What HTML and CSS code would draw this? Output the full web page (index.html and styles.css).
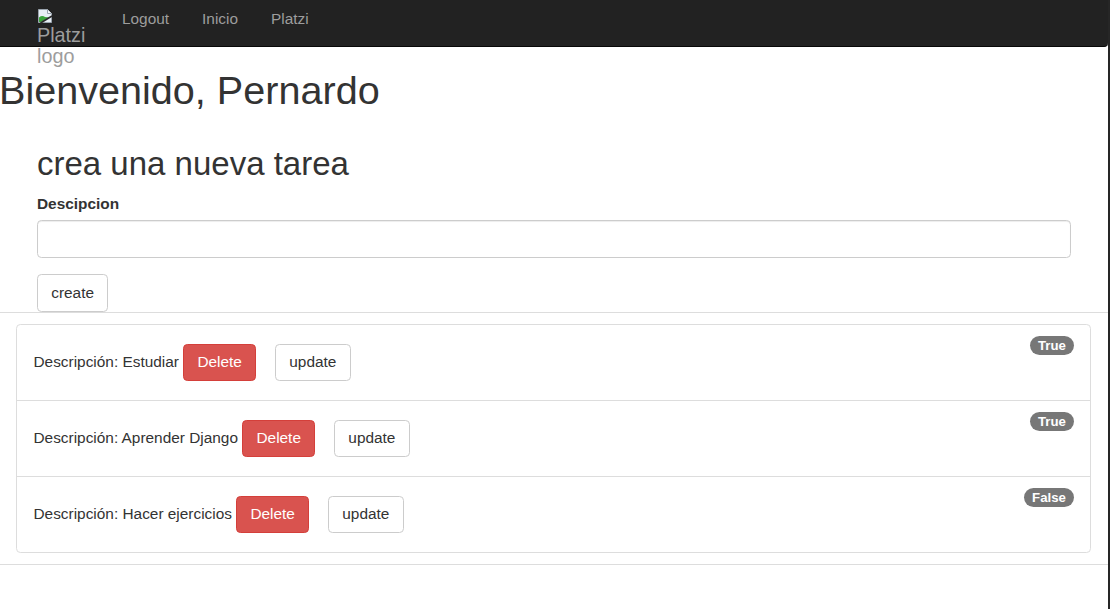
FILE: index.html
```html
<!DOCTYPE html>
<html lang="es">
<head>
<meta charset="utf-8">
<title>Tareas</title>
<link rel="stylesheet" href="styles.css">
</head>
<body>
<div class="page">
  <nav class="navbar">
    <div class="brand">
      <svg class="broken" width="16" height="16" viewBox="0 0 16 16">
        <path d="M1.5 1.5 H10.5 L14.5 5.5 V14.5 H1.5 Z" fill="#e8eef4" stroke="#9aa4ae"/>
        <path d="M10.5 1.5 V5.5 H14.5" fill="#f4f6f8" stroke="#9aa4ae"/>
        <path d="M2 14 V9.5 Q5 7 8 9 L12.5 9.5 L4 14 Z" fill="#3aa23a"/>
        <path d="M3.5 15 L15 8" stroke="#2b2b2b" stroke-width="1.6"/>
      </svg>
      <span class="alt">Platzi logo</span>
    </div>
    <ul class="nav">
      <li><a href="#">Logout</a></li>
      <li><a href="#">Inicio</a></li>
      <li><a href="#">Platzi</a></li>
    </ul>
  </nav>

  <h1 class="welcome">Bienvenido, Pernardo</h1>

  <div class="container">
    <h2 class="title">crea una nueva tarea</h2>
    <form class="task-form">
      <div class="form-group">
        <label class="label" for="desc">Descipcion</label>
        <input class="form-control" id="desc" type="text">
      </div>
      <button class="btn btn-default" type="button">create</button>
    </form>
  </div>

  <section class="tasks">
    <ul class="list-group">
      <li class="list-item">
        <span class="badge">True</span>
        <span class="desc">Descripción: Estudiar</span>
        <button class="btn btn-danger" type="button">Delete</button>
        <button class="btn btn-default btn-update" type="button">update</button>
      </li>
      <li class="list-item">
        <span class="badge">True</span>
        <span class="desc">Descripción: Aprender Django</span>
        <button class="btn btn-danger" type="button">Delete</button>
        <button class="btn btn-default btn-update" type="button">update</button>
      </li>
      <li class="list-item">
        <span class="badge">False</span>
        <span class="desc">Descripción: Hacer ejercicios</span>
        <button class="btn btn-danger" type="button">Delete</button>
        <button class="btn btn-default btn-update" type="button">update</button>
      </li>
    </ul>
  </section>
</div>
</body>
</html>
```

FILE: styles.css
```css
* { box-sizing: border-box; }

html, body {
  margin: 0;
  padding: 0;
  background: #fff;
}

body {
  font-family: "Liberation Sans", Arial, Helvetica, sans-serif;
  font-size: 15.4px;
  line-height: 22px;
  color: #333;
}

.page {
  width: 1110px;
  min-height: 609px;
  border-right: 2px solid #262626;
}

/* navbar */
.navbar {
  display: flex;
  align-items: flex-start;
  height: 47px;
  width: 1108px;
  background: #222;
  border-bottom: 1px solid #080808;
  border-bottom-right-radius: 4px;
}

.brand {
  margin-left: 37px;
  width: 50px;
  color: #9d9d9d;
  font-size: 19.8px;
  line-height: 21px;
}

.broken {
  display: block;
  margin-top: 8px;
  margin-bottom: 1px;
}

.alt { display: block; }

.nav {
  display: flex;
  list-style: none;
  margin: 0 0 0 18.5px;
  padding: 8px 0 0;
}

.nav a {
  display: block;
  padding: 0 16.5px;
  color: #9d9d9d;
  text-decoration: none;
}

/* headings */
.welcome {
  margin: 22px 0 11px -1px;
  font-size: 39.6px;
  line-height: 1.1;
  font-weight: 500;
  color: #333;
}

.container {
  display: flow-root;
  padding: 0 37px;
}

.title {
  margin: 22px 0 11px;
  font-size: 33px;
  line-height: 1.1;
  font-weight: 500;
  color: #333;
}

.form-group { margin-bottom: 16.5px; }

.label {
  display: block;
  font-weight: bold;
  margin-bottom: 5.5px;
}

.form-control {
  display: block;
  width: 100%;
  height: 37.4px;
  padding: 6.6px 13.2px;
  font: inherit;
  color: #555;
  background: #fff;
  border: 1px solid #ccc;
  border-radius: 4.4px;
  box-shadow: inset 0 1px 1px rgba(0,0,0,.075);
}

.task-form { margin: 0; }

/* buttons */
.btn {
  display: inline-block;
  height: 37.4px;
  padding: 6.6px 13.2px;
  font-family: inherit;
  font-size: 15.4px;
  line-height: 22px;
  border: 1px solid #ccc;
  border-radius: 4.4px;
  background: #fff;
  color: #333;
  vertical-align: middle;
  cursor: pointer;
}

.btn-danger {
  background: #d9534f;
  border-color: #d43f3a;
  color: #fff;
}

/* tasks */
.tasks {
  border-top: 1px solid #ddd;
  border-bottom: 1px solid #ddd;
  padding: 11px 17px 11px 16px;
}

.list-group {
  list-style: none;
  margin: 0;
  padding: 0;
  border: 1px solid #ddd;
  border-radius: 4.4px;
}

.list-item {
  position: relative;
  display: flex;
  align-items: baseline;
  padding: 19px 16.5px 18.6px;
}

.list-item + .list-item { border-top: 1px solid #ddd; }

.desc { margin-right: 4.3px; }

.btn-update { margin-left: 19px; }

.badge {
  position: absolute;
  top: 11px;
  right: 16.5px;
  padding: 3.3px 7.7px;
  font-size: 13.2px;
  line-height: 1;
  font-weight: bold;
  color: #fff;
  background: #777;
  border-radius: 11px;
}
```
